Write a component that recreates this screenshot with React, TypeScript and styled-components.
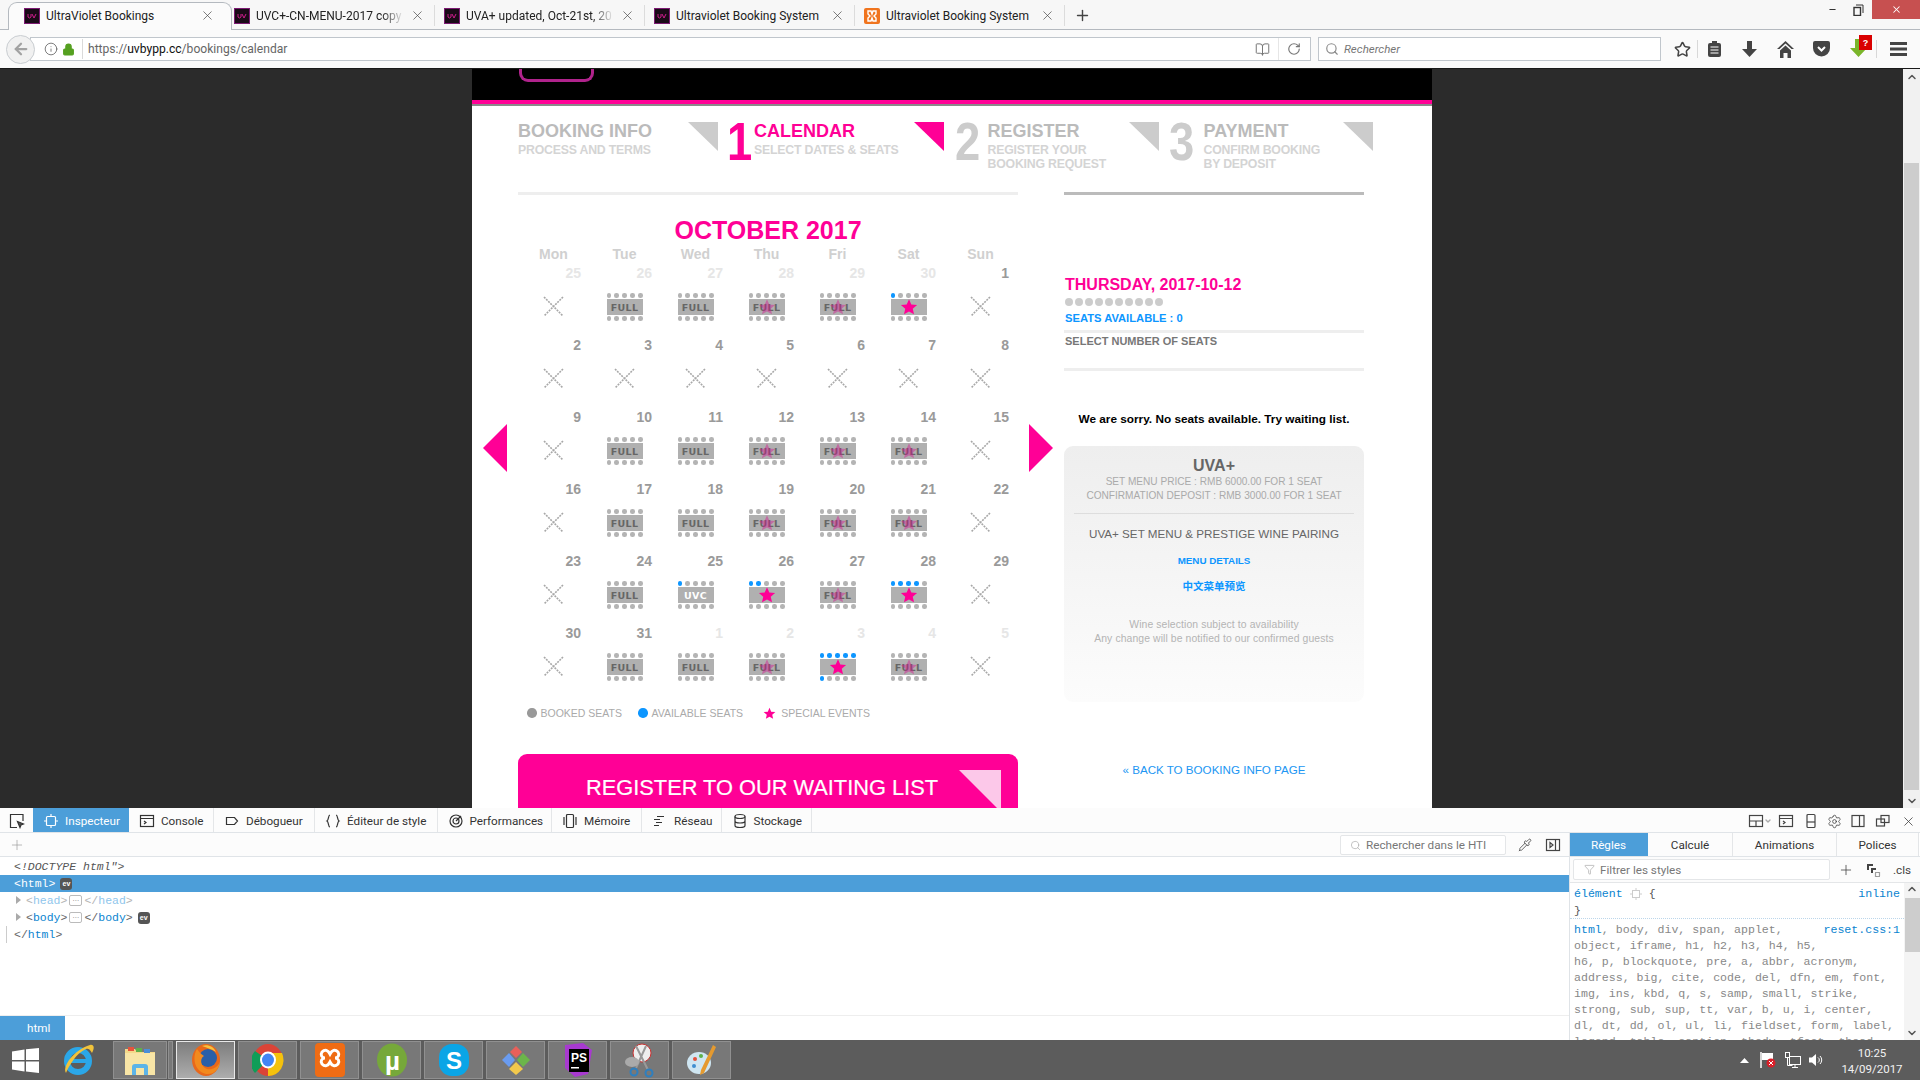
import React from "react";
import styled, { createGlobalStyle } from "styled-components";
import { Info, Lock, ArrowLeft, BookOpen, RotateCw, Search, Star, Plus, X, Minus, Settings, Filter, ChevronUp, ChevronDown, Pipette, ChevronDown as Caret } from "lucide-react";

const PINK = "#ff0096";
const BLUE = "#0d96ff";
const UI = `Roboto, "Noto Sans", sans-serif`;
const ARIAL = `"Liberation Sans", Arial, "Noto Sans CJK SC", sans-serif`;
const MONO = `"Liberation Mono", monospace`;

const Global = createGlobalStyle`
  html, body { margin: 0; padding: 0; background: #2b2b2b; }
  * { box-sizing: border-box; }
`;

const Screen = styled.div`
  width: 1920px; height: 1080px; display: flex; flex-direction: column; overflow: hidden;
  font-family: ${UI}; color: #222;
`;

/* ---------- browser tabs ---------- */
const TabBar = styled.div`
  height: 30px; display: flex; padding-left: 15px; background: #f7f7f7;
  border-bottom: 1px solid #b4b9bf; position: relative;
`;
const Tab = styled.div<{ $active?: boolean }>`
  width: 210px; height: 29px; display: flex; align-items: center; gap: 6px; padding: 2px 10px 0 9px;
  position: relative; font-size: 12px; color: #222;
  &::before {
    content: ""; position: absolute; left: -7px; right: -7px; top: 2px; bottom: -1px;
    background: ${p => (p.$active ? "#fbfbfb" : "transparent")};
    border: ${p => (p.$active ? "1px solid #b4b9bf" : "none")}; border-bottom: none; border-radius: 9px 9px 0 0;
  }
  &::after {
    content: ""; position: absolute; right: 0; top: 5px; bottom: 3px; width: 1px;
    background: ${p => (p.$active ? "transparent" : "#dcdcdc")};
  }
  & > * { position: relative; z-index: 1; }
`;
const TabLabel = styled.span<{ $fade?: boolean }>`
  flex: 1; white-space: nowrap; overflow: hidden;
  ${p => (p.$fade ? `
    -webkit-mask-image: linear-gradient(to right, #000 85%, transparent);
    mask-image: linear-gradient(to right, #000 85%, transparent);
  ` : "")}
`;
const NewTab = styled.div`
  width: 34px; padding-top: 2px; display: flex; align-items: center; justify-content: center; color: #444;
`;
const WinControls = styled.div`
  margin-left: auto; display: flex; align-items: flex-start; height: 19px;
`;
const WinBtn = styled.div<{ $close?: boolean }>`
  width: ${p => (p.$close ? "48px" : "26px")}; height: 19px; margin-left: ${p => (p.$close ? "1px" : "0")};
  display: flex; align-items: center; justify-content: center;
  background: ${p => (p.$close ? "#c75050" : "transparent")}; color: ${p => (p.$close ? "#fff" : "#333")};
`;

/* ---------- nav bar ---------- */
const NavBar = styled.div`
  height: 39px; display: flex; align-items: center; padding-left: 6px; background: #fafafa;
  border-bottom: 1px solid #1a1a1a;
`;
const BackBtn = styled.div`
  width: 29px; height: 29px; border-radius: 50%; background: #f1f1f1; border: 1px solid #c9cdd1;
  display: flex; align-items: center; justify-content: center; color: #a2a2a2; position: relative; z-index: 1;
  margin-right: -5px; flex: none;
`;
const Field = styled.div`
  height: 24px; background: #fff; border: 1px solid #c0c6cc; display: flex; align-items: center;
`;
const UrlField = styled(Field)`
  width: 1281px; padding-left: 13px; color: #666; font-size: 12.1px;
`;
const SearchField = styled(Field)`
  width: 343px; margin-left: 7px; padding-left: 6px; gap: 5px; color: #777; font-size: 11.5px; font-style: italic;
`;
const UrlIcon = styled.span`
  display: flex; color: #555; margin-right: 4px;
`;
const Divider = styled.span`
  width: 1px; height: 20px; background: #dadada; margin: 0 5px 0 3px;
`;
const UrlHost = styled.b`
  font-weight: 400; color: #111;
`;
const UrlRight = styled.span`
  margin-left: auto; display: flex; align-items: center; color: #777; padding-right: 9px;
`;
const UrlDiv = styled.span`
  width: 1px; height: 22px; background: #e6e6e6; margin: 0 8px;
`;
const ToolSlot = styled.div<{ $w: number; $sep?: boolean }>`
  width: ${p => p.$w}px; height: 100%; display: flex; align-items: center; justify-content: center;
  color: #444; position: relative; flex: none;
  ${p => (p.$sep ? "&::after { content: ''; position: absolute; right: 0; top: 10px; bottom: 10px; width: 1px; background: #d8d8d8; }" : "")}
`;
const Tools = styled.div`
  display: flex; height: 100%; margin-left: 5px;
`;
const RedBadge = styled.span`
  position: absolute; left: 20px; top: 5px; width: 13px; height: 15px; background: #d90000; color: #fff;
  font: bold 9px ${ARIAL}; display: flex; align-items: center; justify-content: center;
`;

/* ---------- page ---------- */
const PageArea = styled.div`
  height: 739px; display: flex; overflow: hidden; background: #2b2b2b;
`;
const PageView = styled.div`
  flex: 1; overflow: hidden;
`;
const Column = styled.div`
  width: 960px; margin-left: 472px; height: 900px; background: #fff; position: relative; font-family: ${ARIAL};
`;
const Scrollbar = styled.div`
  width: 17px; background: #f1f1f1; display: flex; flex-direction: column; align-items: center;
  color: #555; flex: none;
`;
const ScrollThumb = styled.div<{ $top: number; $h: number }>`
  width: 15px; height: ${p => p.$h}px; margin-top: ${p => p.$top}px; background: #cdcdcd; flex: none;
`;
const ScrollEnd = styled.div`
  margin-top: auto; height: 15px; display: flex; align-items: center;
`;
const ScrollStart = styled.div`
  height: 15px; display: flex; align-items: center;
`;
const SiteHeader = styled.div`
  height: 35px; background: #000; border-bottom: 4px solid ${PINK}; padding-left: 47px;
  box-shadow: 0 2px 0 #8a8a8a;
`;
const LogoStub = styled.div`
  width: 75px; height: 13px; border: 3px solid #b0238c; border-top: none; border-radius: 0 0 9px 9px;
`;
const Steps = styled.div`
  display: flex; margin-top: 18px; padding-left: 46px; height: 70px;
`;
const StepNum = styled.div<{ $w: number; $on?: boolean; $gap: number }>`
  width: ${p => p.$w}px; margin-left: ${p => p.$gap}px; font-size: 54px; font-weight: 700; line-height: 39px; height: 39px;
  color: ${p => (p.$on ? PINK : "#ccc")}; transform: scaleX(0.84); transform-origin: left center;
`;
const StepText = styled.div<{ $w: number }>`
  width: ${p => p.$w}px; flex: none;
`;
const StepTitle = styled.div<{ $on?: boolean }>`
  font-size: 18px; font-weight: 700; line-height: 18px; color: ${p => (p.$on ? PINK : "#bbb")};
`;
const StepSub = styled.div`
  font-size: 12.3px; font-weight: 700; line-height: 14px; margin-top: 3px; color: #d4d4d4; letter-spacing: -0.2px;
`;
const Flag = styled.div<{ $on?: boolean }>`
  width: 30px; height: 29px; flex: none; background: ${p => (p.$on ? PINK : "#ccc")};
  clip-path: polygon(0 0, 100% 0, 100% 100%);
`;
const Rules = styled.div`
  display: flex; gap: 46px; padding-left: 46px;
`;
const Rule = styled.div<{ $w: number; $c: string }>`
  width: ${p => p.$w}px; height: 3px; background: ${p => p.$c};
`;
const Body = styled.div`
  display: flex; gap: 46px; padding-left: 46px;
`;
const Left = styled.div`
  width: 500px; flex: none;
`;
const Right = styled.div`
  width: 300px; flex: none;
`;
const Month = styled.div`
  margin-top: 23px; font-size: 25px; font-weight: 700; line-height: 25px; text-align: center; color: ${PINK};
`;
const CalGrid = styled.div`
  display: grid; grid-template-columns: repeat(6, 71px) 73px;
`;
const Dow = styled.div`
  margin-top: 3px; height: 19px; text-align: center; font-size: 14px; font-weight: 700; line-height: 16px; color: #d0d0d0;
`;
const Cell = styled.div`
  height: 72px; display: flex; flex-direction: column; align-items: center;
`;
const DayNum = styled.div<{ $muted?: boolean }>`
  align-self: stretch; text-align: right; padding-right: 8px; font-size: 14px; font-weight: 700; line-height: 16px;
  color: ${p => (p.$muted ? "#e6e6e6" : "#9a9a9a")}; margin-bottom: 12px;
`;
const NoSeats = styled.svg`
  margin-top: 3px; display: block;
`;
const SeatBlock = styled.div`
  width: 36px; height: 28px; display: flex; flex-direction: column; gap: 1px;
`;
const SeatRow = styled.div`
  display: flex; justify-content: space-between; align-items: center; height: 5px;
`;
const Seat = styled.span<{ $free?: boolean }>`
  width: 4.5px; height: 4.5px; border-radius: 50%; background: ${p => (p.$free ? "#0d96ff" : "#b4b4b4")};
`;
const Band = styled.div<{ $white?: boolean }>`
  height: 16px; background: #b0b0b0; position: relative; display: flex; align-items: center; justify-content: center;
  font-weight: 700; letter-spacing: 0.3px; color: ${p => (p.$white ? "#fff" : "#666")};
  font-family: "DejaVu Sans", sans-serif; font-size: 9.5px;
`;
const BandStar = styled.svg<{ $faded?: boolean }>`
  position: absolute; left: 9px; top: -1px; opacity: ${p => (p.$faded ? 0.42 : 1)};
`;
const Legend = styled.div`
  margin-top: 9px; padding-left: 9px; height: 14px; display: flex; align-items: center; font-size: 10.5px; color: #aaa;
`;
const LegendDot = styled.span<{ $c: string }>`
  width: 9.5px; height: 9.5px; border-radius: 50%; background: ${p => p.$c}; margin-right: 4px; flex: none;
`;
const LegendText = styled.span<{ $mr: number }>`
  margin-right: ${p => p.$mr}px;
`;
const LegendStar = styled.svg`
  margin-right: 5px; flex: none;
`;
const WaitBtn = styled.div`
  margin-top: 34px; height: 70px; border-radius: 9px 9px 0 0; background: ${PINK}; position: relative;
  color: #fff; font-size: 21.8px; line-height: 26px; padding: 21px 0 0 68px; -webkit-text-stroke: 0.2px #fff;
`;
const WaitFlag = styled.div`
  position: absolute; left: 441px; top: 16px; width: 42px; height: 42px; background: #fcc8e9;
  clip-path: polygon(0 0, 100% 0, 100% 100%);
`;
const Arrow = styled.div<{ $right?: boolean }>`
  position: absolute; top: 355px; ${p => (p.$right ? "left: 557px" : "left: 11px")}; width: 24px; height: 48px; background: ${PINK};
  clip-path: ${p => (p.$right ? "polygon(0 0, 100% 50%, 0 100%)" : "polygon(100% 0, 0 50%, 100% 100%)")};
`;
const DayTitle = styled.div`
  margin-top: 81px; padding-left: 1px; font-size: 16px; line-height: 18px; font-weight: 700; color: ${PINK};
`;
const SeatDots = styled.div`
  margin-top: 4px; padding-left: 1px; display: flex; gap: 2px;
`;
const BigSeat = styled.span`
  width: 8px; height: 8px; border-radius: 50%; background: #ccc;
`;
const SeatsLeft = styled.div`
  margin-top: 5px; padding-left: 1px; font-size: 11.2px; line-height: 14px; font-weight: 700; color: ${BLUE};
`;
const SelectTitle = styled.div`
  padding-left: 1px; margin-top: 1px; font-size: 11px; line-height: 14px; font-weight: 700; color: #777;
`;
const ThinRule = styled.div<{ $top: number }>`
  height: 3px; background: #eee; margin-top: ${p => p.$top}px;
`;
const Sorry = styled.div`
  margin-top: 41px; text-align: center; font-size: 11.8px; line-height: 14px; font-weight: 700; color: #000;
`;
const Card = styled.div`
  margin-top: 20px; height: 256px; border-radius: 9px; background: linear-gradient(#eeeeee, #fcfcfc);
  padding: 11px 10px 0; text-align: center;
`;
const CardTitle = styled.div`
  font-size: 16px; line-height: 18px; font-weight: 700; color: #666;
`;
const CardPrice = styled.div`
  font-size: 10.1px; line-height: 14px; color: #aaa; padding-bottom: 10px; border-bottom: 1px solid #ddd;
`;
const CardName = styled.div`
  font-size: 11.65px; line-height: 16px; color: #666; margin-top: 12px;
`;
const CardLink = styled.div<{ $top: number; $size: number }>`
  font-size: ${p => p.$size}px; line-height: 14px; font-weight: 700; color: ${BLUE}; margin-top: ${p => p.$top}px;
`;
const CardNote = styled.div`
  margin-top: 25px; font-size: 10.4px; line-height: 13.5px; color: #b4b4b4; letter-spacing: 0.1px;
`;
const BackLink = styled.div`
  margin-top: 61px; text-align: center; font-size: 11.6px; line-height: 14px; color: #2196f3;
`;

/* ---------- devtools ---------- */
const DevTools = styled.div`
  height: 232px; background: #fff; display: flex; flex-direction: column; font-family: ${UI}; font-size: 11.7px;
`;
const DevBar = styled.div`
  height: 25px; display: flex; background: #fcfcfc; border-bottom: 1px solid #e0e4e8;
`;
const PickBtn = styled.div`
  width: 33px; padding-top: 2px; display: flex; align-items: center; justify-content: center;
`;
const DevTab = styled.div<{ $w: number; $on?: boolean }>`
  width: ${p => p.$w}px; display: flex; align-items: center; gap: 6px; padding: 2px 0 0 10px; white-space: nowrap;
  background: ${p => (p.$on ? "#4c9ed9" : "transparent")}; color: ${p => (p.$on ? "#fff" : "#333")};
  border-right: 1px solid ${p => (p.$on ? "#4c9ed9" : "#e4e6e8")};
`;
const DevEnd = styled.div`
  margin-left: auto; display: flex; align-items: center; padding-top: 2px; color: #444;
`;
const DevIcon = styled.div<{ $w: number }>`
  width: ${p => p.$w}px; display: flex; justify-content: center; align-items: center;
`;
const DevSplit = styled.div`
  flex: 1; display: flex; min-height: 0;
`;
const MarkupPane = styled.div`
  width: 1570px; border-right: 1px solid #dfe3e7; display: flex; flex-direction: column; flex: none;
`;
const SubBar = styled.div`
  height: 24px; display: flex; align-items: center; padding-top: 1px; background: #fcfcfc; border-bottom: 1px solid #e0e4e8; flex: none;
`;
const SubPlus = styled.div`
  margin-left: 9px; display: flex; color: #999;
`;
const SubSearch = styled.div`
  margin-left: auto; margin-right: 6px; width: 166px; height: 20px; border: 1px solid #e4e6e8; border-radius: 2px; background: #fff;
  display: flex; align-items: center; gap: 5px; padding-left: 9px; color: #777; overflow: hidden; white-space: nowrap;
`;
const SubIcon = styled.div<{ $w: number }>`
  width: ${p => p.$w}px; display: flex; justify-content: center; color: #444; flex: none;
`;
const Markup = styled.div`
  padding-top: 1px; font-family: ${MONO}; font-size: 11.5px; flex: 1;
`;
const MLine = styled.div<{ $sel?: boolean; $pad: number }>`
  height: 17px; line-height: 17px; padding-left: ${p => p.$pad}px; white-space: nowrap; display: flex; align-items: center; position: relative;
  background: ${p => (p.$sel ? "#4c9ed9" : "transparent")}; color: ${p => (p.$sel ? "#fff" : "#666")};
`;
const Doctype = styled.i`
  color: #555;
`;
const TagName = styled.span<{ $faded?: boolean }>`
  color: ${p => (p.$faded ? "#8fc6ec" : "#0a84d0")};
`;
const Angle = styled.span<{ $faded?: boolean }>`
  color: ${p => (p.$faded ? "#b5b5b5" : "#666")};
`;
const Ev = styled.span`
  display: inline-block; margin-left: 5px; width: 12px; height: 12px; border-radius: 3px; background: #555; color: #fff;
  font: bold 7px/12px ${ARIAL}; text-align: center;
`;
const Ellipsis = styled.span`
  display: inline-block; width: 13px; height: 11px; border: 1px solid #bbb; border-radius: 2px; color: #888;
  font: 8px/6px ${ARIAL}; text-align: center; margin: 0 2px;
`;
const Twisty = styled.span`
  position: absolute; left: 16px; top: 4px; border-left: 5px solid #aaa; border-top: 4.5px solid transparent; border-bottom: 4.5px solid transparent;
`;
const Guide = styled.span`
  position: absolute; left: 6px; top: 0; bottom: 0; width: 1px; background: #ccc;
`;
const Crumbs = styled.div`
  height: 25px; border-top: 1px solid #eee; flex: none; display: flex;
`;
const Crumb = styled.div`
  width: 65px; background: #4c9ed9; color: #fff; display: flex; align-items: center; padding-left: 27px;
`;
const RulesPane = styled.div`
  flex: 1; display: flex; flex-direction: column; min-width: 0;
`;
const RuleTabs = styled.div`
  height: 24px; display: flex; border-bottom: 1px solid #e0e4e8; flex: none;
`;
const RuleTab = styled.div<{ $w: number; $on?: boolean }>`
  width: ${p => p.$w}px; display: flex; align-items: center; justify-content: center; padding-top: 1px;
  background: ${p => (p.$on ? "#4c9ed9" : "#fcfcfc")}; color: ${p => (p.$on ? "#fff" : "#333")};
  border-right: 1px solid ${p => (p.$on ? "#4c9ed9" : "#e4e6e8")};
`;
const FilterRow = styled.div`
  height: 26px; display: flex; align-items: center; padding-left: 3px; border-bottom: 1px solid #e4e6e8; flex: none; background: #fcfcfc;
`;
const FilterBox = styled.div`
  width: 257px; height: 21px; border: 1px solid #e4e6e8; border-radius: 2px; background: #fff; display: flex; align-items: center;
  gap: 5px; padding-left: 10px; color: #777;
`;
const RuleBody = styled.div`
  flex: 1; display: flex; min-height: 0; overflow: hidden;
`;
const RuleText = styled.div`
  flex: 1; font-family: ${MONO}; font-size: 11.6px; line-height: 16px; color: #888; overflow: hidden; min-width: 0;
`;
const ElemBlock = styled.div`
  padding: 2px 4px 1px 4px; height: 36px; border-bottom: 1px dotted #bcd6ea; line-height: 17px;
`;
const RuleHead = styled.div`
  display: flex; align-items: center; gap: 7px;
`;
const RuleBlue = styled.span<{ $end?: boolean }>`
  color: #0a84d0; ${p => (p.$end ? "margin-left: auto;" : "")}
`;
const RuleDark = styled.span`
  color: #555;
`;
const Selectors = styled.div`
  padding: 3px 4px 0; white-space: nowrap;
`;
const SelLine = styled.div`
  display: flex; height: 16px; white-space: pre;
`;
const PaneScroll = styled.div`
  width: 16px; background: #f4f4f4; display: flex; flex-direction: column; align-items: center; color: #555; flex: none;
`;

/* ---------- taskbar ---------- */
const Taskbar = styled.div`
  height: 40px; background: #5c5c5c; display: flex; align-items: center; padding-left: 12px; color: #fff; flex: none;
`;
const TaskPlain = styled.div<{ $w: number }>`
  width: ${p => p.$w}px; display: flex; align-items: center; flex: none;
`;
const TaskBtn = styled.div<{ $on?: boolean; $w?: number; $mr?: number }>`
  width: ${p => p.$w ?? 59}px; height: 38px; margin-right: ${p => p.$mr ?? 3}px; flex: none; display: flex; align-items: center; justify-content: center;
  background: ${p => (p.$on ? "linear-gradient(#7d7d7d, #adadad)" : "#787878")};
  border: 1px solid ${p => (p.$on ? "#e8e8e8" : "#909090")};
`;
const Tray = styled.div`
  margin-left: auto; display: flex; align-items: center; height: 100%;
`;
const TraySlot = styled.div<{ $w: number }>`
  width: ${p => p.$w}px; display: flex; justify-content: center; align-items: center;
`;
const Clock = styled.div`
  width: 72px; margin-right: 12px; margin-left: 7px; padding-top: 1px; text-align: center; font-size: 11.5px; line-height: 16px; color: #f2f2f2;
`;
const SvgText = styled.text`
  font-family: ${ARIAL}; font-weight: 700;
`;

const STAR = "12,1.5 15.1,8.6 22.8,9.3 17,14.3 18.7,21.8 12,17.9 5.3,21.8 7,14.3 1.2,9.3 8.9,8.6";

type Kind = "x" | "full" | "fs" | "star" | "uvc";
type Day = [number, Kind, boolean?, number?, number?];

const WEEKS: Day[][] = [
  [[25, "x", true], [26, "full", true], [27, "full", true], [28, "fs", true], [29, "fs", true], [30, "star", true, 1], [1, "x"]],
  [[2, "x"], [3, "x"], [4, "x"], [5, "x"], [6, "x"], [7, "x"], [8, "x"]],
  [[9, "x"], [10, "full"], [11, "full"], [12, "fs"], [13, "fs"], [14, "fs"], [15, "x"]],
  [[16, "x"], [17, "full"], [18, "full"], [19, "fs"], [20, "fs"], [21, "fs"], [22, "x"]],
  [[23, "x"], [24, "full"], [25, "uvc", false, 1], [26, "star", false, 2], [27, "fs"], [28, "star", false, 4], [29, "x"]],
  [[30, "x"], [31, "full"], [1, "full", true], [2, "fs", true], [3, "star", true, 5, 1], [4, "fs", true], [5, "x", true]],
];

const Seats = ({ free = 0 }: { free?: number }) => (
  <SeatRow>
    {[0, 1, 2, 3, 4].map(i => <Seat key={i} $free={i < free} />)}
  </SeatRow>
);

const DayIcon = ({ kind, top, bottom }: { kind: Kind; top?: number; bottom?: number }) => {
  if (kind === "x") {
    return (
      <NoSeats width="21" height="21" viewBox="0 0 21 21">
        <path d="M1 1 L20 20 M20 1 L1 20" stroke="#a8a8a8" strokeWidth="1.6" strokeDasharray="2 1" fill="none" />
      </NoSeats>
    );
  }
  return (
    <SeatBlock>
      <Seats free={top} />
      <Band $white={kind === "uvc"}>
        {kind === "full" || kind === "fs" ? "FULL" : kind === "uvc" ? "UVC" : null}
        {(kind === "fs" || kind === "star") && (
          <BandStar $faded={kind === "fs"} width="18" height="18" viewBox="0 0 24 24"><polygon points={STAR} fill={kind === "fs" ? "#d8108f" : PINK} /></BandStar>
        )}
      </Band>
      <Seats free={bottom} />
    </SeatBlock>
  );
};

const Favicon = ({ xampp }: { xampp?: boolean }) => xampp ? (
  <svg width="16" height="16" viewBox="0 0 16 16"><rect width="16" height="16" rx="2" fill="#f0741e" /><path d="M4 3h3l1 3 1-3h3v3l-2 2 2 2v3H9L8 10l-1 3H4v-3l2-2-2-2z" fill="none" stroke="#fff" strokeWidth="1.4" /></svg>
) : (
  <svg width="16" height="16" viewBox="0 0 16 16"><rect width="16" height="16" fill="#1a0a18" /><rect x=".5" y=".5" width="15" height="15" fill="none" stroke="#7c1a72" /><path d="M4 6v3l1.500 1L7 9V6M8 6l2 4 2-4" fill="none" stroke="#e2209a" strokeWidth=".9" /></svg>
);

const BrowserTab = ({ label, active, xampp, fade }: { label: string; active?: boolean; xampp?: boolean; fade?: boolean }) => (
  <Tab $active={active}>
    <Favicon xampp={xampp} />
    <TabLabel $fade={fade}>{label}</TabLabel>
    <X size={15} strokeWidth={1.1} color="#444" />
  </Tab>
);

const Ic = ({ children, s = 16, w = 1.2 }: { children: React.ReactNode; s?: number; w?: number }) => (
  <svg width={s} height={s} viewBox="0 0 16 16" fill="none" stroke="currentColor" strokeWidth={w}>{children}</svg>
);

const DEV_TABS: { label: string; w: number; icon: React.ReactNode; on?: boolean }[] = [
  { label: "Inspecteur", w: 96, on: true, icon: <Ic><rect x="3.5" y="3.5" width="9" height="9" rx="1" /><path d="M8 1v2M8 13v2M1 8h2M13 8h2" /></Ic> },
  { label: "Console", w: 85, icon: <Ic><rect x="1.5" y="2.5" width="13" height="11" /><path d="M1.5 5.5h13M5 8l2 1.5L5 11" /></Ic> },
  { label: "Débogueur", w: 101, icon: <Ic><path d="M2.5 4.5h8l3 3.5-3 3.5h-8z" /></Ic> },
  { label: "Éditeur de style", w: 122.5, icon: <Ic><path d="M5 2C3 2 4 7 2 8c2 1 1 6 3 6M11 2c2 0 1 5 3 6-2 1-1 6-3 6" /></Ic> },
  { label: "Performances", w: 114.5, icon: <Ic><circle cx="8" cy="8" r="6" /><circle cx="8" cy="8" r="3" /><path d="M8 8l5-5" /></Ic> },
  { label: "Mémoire", w: 90, icon: <Ic><rect x="4.5" y="1.5" width="7" height="13" rx="1" /><path d="M2 4v8M14 4v8" /></Ic> },
  { label: "Réseau", w: 79.5, icon: <Ic><path d="M5 3.5h7M2 6.5h6M4 9.5h6M2 12.5h5" /></Ic> },
  { label: "Stockage", w: 90, icon: <Ic><ellipse cx="8" cy="3.5" rx="5" ry="2" /><path d="M3 3.5v9c0 1 2 2 5 2s5-1 5-2v-9M3 8c0 1 2 2 5 2s5-1 5-2" /></Ic> },
];

const SELECTOR_LINES = [
  "object, iframe, h1, h2, h3, h4, h5,",
  "h6, p, blockquote, pre, a, abbr, acronym,",
  "address, big, cite, code, del, dfn, em, font,",
  "img, ins, kbd, q, s, samp, small, strike,",
  "strong, sub, sup, tt, var, b, u, i, center,",
  "dl, dt, dd, ol, ul, li, fieldset, form, label,",
  "legend, table, caption, tbody, tfoot, thead,",
];

export default function App() {
  return (
    <Screen>
      <Global />
      <TabBar>
        <BrowserTab active label="UltraViolet Bookings" />
        <BrowserTab fade label="UVC+-CN-MENU-2017 copy" />
        <BrowserTab fade label="UVA+ updated, Oct-21st, 20" />
        <BrowserTab label="Ultraviolet Booking System" />
        <BrowserTab xampp label="Ultraviolet Booking System" />
        <NewTab><Plus size={17} strokeWidth={2} /></NewTab>
        <WinControls>
          <WinBtn><Minus size={9} strokeWidth={3} /></WinBtn>
          <WinBtn>
            <svg width="11" height="12" viewBox="0 0 11 12" fill="none" stroke="#333"><rect x="1" y="3.5" width="6.5" height="8" strokeWidth="1.4" /><path d="M3 1h7v8" /></svg>
          </WinBtn>
          <WinBtn $close><X size={11} strokeWidth={2.2} /></WinBtn>
        </WinControls>
      </TabBar>

      <NavBar>
        <BackBtn><ArrowLeft size={18} strokeWidth={3} /></BackBtn>
        <UrlField>
          <UrlIcon><Info size={14} strokeWidth={1.3} /></UrlIcon>
          <UrlIcon><Lock size={13} fill="#55a020" color="#55a020" /></UrlIcon>
          <Divider />
          <span>https://<UrlHost>uvbypp.cc</UrlHost>/bookings/calendar</span>
          <UrlRight>
            <BookOpen size={15} strokeWidth={1.6} />
            <UrlDiv />
            <RotateCw size={14} strokeWidth={2} />
          </UrlRight>
        </UrlField>
        <SearchField>
          <Search size={14} strokeWidth={2} color="#8a8a8a" />
          Rechercher
        </SearchField>
        <Tools>
          <ToolSlot $w={32} $sep><Star size={17} strokeWidth={2.2} /></ToolSlot>
          <ToolSlot $w={33}>
            <svg width="15" height="18" viewBox="0 0 15 18"><rect x="1" y="3" width="13" height="14" rx="2" fill="#444" /><rect x="5" y="1" width="5" height="4" fill="#444" /><path d="M3.5 7h8M3.5 10h8M3.5 13h8" stroke="#fff" /></svg>
          </ToolSlot>
          <ToolSlot $w={36}>
            <svg width="15" height="16" viewBox="0 0 15 16"><path d="M5 0h5v8h5l-7.500 8L0 8h5z" fill="#444" /></svg>
          </ToolSlot>
          <ToolSlot $w={36}>
            <svg width="17" height="17" viewBox="0 0 17 17"><path d="M8.500 0L17 8h-2.500l-6-5.500L2.500 8H0z M8.500 4.500L14 9.500V17h-3.500v-5h-4v5H3V9.500z" fill="#444" /></svg>
          </ToolSlot>
          <ToolSlot $w={36}>
            <svg width="17" height="16" viewBox="0 0 17 16"><path d="M2 0h13a2 2 0 0 1 2 2v5a8.500 8.500 0 0 1-17 0V2a2 2 0 0 1 2-2z" fill="#444" /><path d="M5 6l3.500 3.500L12 6" stroke="#fff" strokeWidth="2" fill="none" /></svg>
          </ToolSlot>
          <ToolSlot $w={38} $sep>
            <svg width="17" height="20" viewBox="0 0 17 20"><path d="M5 0h7v9h5l-8.500 9L0 9h5z" fill="#7ab52a" /></svg>
            <RedBadge>?</RedBadge>
          </ToolSlot>
          <ToolSlot $w={43}>
            <svg width="17" height="14" viewBox="0 0 17 14"><path d="M0 1.500h17M0 7h17M0 12.500h17" stroke="#444" strokeWidth="3" /></svg>
          </ToolSlot>
        </Tools>
      </NavBar>

      <PageArea>
        <PageView>
          <Column>
            <SiteHeader><LogoStub /></SiteHeader>
            <Steps>
              <StepText $w={170}>
                <StepTitle>BOOKING INFO</StepTitle>
                <StepSub>PROCESS AND TERMS</StepSub>
              </StepText>
              <Flag />
              <StepNum $w={27} $gap={9} $on>1</StepNum>
              <StepText $w={160}>
                <StepTitle $on>CALENDAR</StepTitle>
                <StepSub>SELECT DATES &amp; SEATS</StepSub>
              </StepText>
              <Flag $on />
              <StepNum $w={32.5} $gap={11}>2</StepNum>
              <StepText $w={141.5}>
                <StepTitle>REGISTER</StepTitle>
                <StepSub>REGISTER YOUR<br />BOOKING REQUEST</StepSub>
              </StepText>
              <Flag />
              <StepNum $w={34.5} $gap={10}>3</StepNum>
              <StepText $w={139.5}>
                <StepTitle>PAYMENT</StepTitle>
                <StepSub>CONFIRM BOOKING<br />BY DEPOSIT</StepSub>
              </StepText>
              <Flag />
            </Steps>
            <Rules>
              <Rule $w={500} $c="#eeeeee" />
              <Rule $w={300} $c="#bbbbbb" />
            </Rules>
            <Body>
              <Left>
                <Month>OCTOBER 2017</Month>
                <CalGrid>
                  {["Mon", "Tue", "Wed", "Thu", "Fri", "Sat", "Sun"].map(d => <Dow key={d}>{d}</Dow>)}
                  {WEEKS.flat().map(([n, kind, muted, top, bottom], i) => (
                    <Cell key={i}>
                      <DayNum $muted={muted}>{n}</DayNum>
                      <DayIcon kind={kind} top={top} bottom={bottom} />
                    </Cell>
                  ))}
                </CalGrid>
                <Legend>
                  <LegendDot $c="#999" />
                  <LegendText $mr={16}>BOOKED SEATS</LegendText>
                  <LegendDot $c={BLUE} />
                  <LegendText $mr={20}>AVAILABLE SEATS</LegendText>
                  <LegendStar width="13" height="13" viewBox="0 0 24 24"><polygon points={STAR} fill={PINK} /></LegendStar>
                  <LegendText $mr={0}>SPECIAL EVENTS</LegendText>
                </Legend>
                <WaitBtn>
                  REGISTER TO OUR WAITING LIST
                  <WaitFlag />
                </WaitBtn>
              </Left>
              <Right>
                <DayTitle>THURSDAY, 2017-10-12</DayTitle>
                <SeatDots>{Array.from({ length: 10 }, (_, i) => <BigSeat key={i} />)}</SeatDots>
                <SeatsLeft>SEATS AVAILABLE : 0</SeatsLeft>
                <ThinRule $top={5} />
                <SelectTitle>SELECT NUMBER OF SEATS</SelectTitle>
                <ThinRule $top={20} />
                <Sorry>We are sorry. No seats available. Try waiting list.</Sorry>
                <Card>
                  <CardTitle>UVA+</CardTitle>
                  <CardPrice>SET MENU PRICE : RMB 6000.00 FOR 1 SEAT<br />CONFIRMATION DEPOSIT : RMB 3000.00 FOR 1 SEAT</CardPrice>
                  <CardName>UVA+ SET MENU &amp; PRESTIGE WINE PAIRING</CardName>
                  <CardLink $top={12} $size={9.8}>MENU DETAILS</CardLink>
                  <CardLink $top={11} $size={10.5}>中文菜单预览</CardLink>
                  <CardNote>Wine selection subject to availability<br />Any change will be notified to our confirmed guests</CardNote>
                </Card>
                <BackLink>« BACK TO BOOKING INFO PAGE</BackLink>
              </Right>
            </Body>
            <Arrow />
            <Arrow $right />
          </Column>
        </PageView>
        <Scrollbar>
          <ScrollStart><ChevronUp size={12} strokeWidth={3} /></ScrollStart>
          <ScrollThumb $top={79} $h={627} />
          <ScrollEnd><ChevronDown size={12} strokeWidth={3} /></ScrollEnd>
        </Scrollbar>
      </PageArea>

      <DevTools>
        <DevBar>
          <PickBtn>
            <svg width="16" height="16" viewBox="0 0 16 16" fill="none" stroke="#333" strokeWidth="1.2"><path d="M14 8V1.500H1.500v13H8" /><path d="M8.500 8.500l6 2.500-2.500 1-1 2.500z" fill="#555" /></svg>
          </PickBtn>
          {DEV_TABS.map(t => (
            <DevTab key={t.label} $w={t.w} $on={t.on}>{t.icon}{t.label}</DevTab>
          ))}
          <DevEnd>
            <DevIcon $w={26}><Ic><rect x="1.5" y="2.5" width="13" height="11" /><path d="M1.5 8h13M8 8v5.500" /></Ic><Caret size={8} strokeWidth={4} color="#aaa" /></DevIcon>
            <DevIcon $w={25}><Ic><rect x="1.500" y="2.500" width="13" height="11" /><path d="M1.500 5.500h13M5 8l2 1.500L5 11" /></Ic></DevIcon>
            <DevIcon $w={25}><Ic><rect x="4" y="1.500" width="8" height="13" rx="1" /><path d="M4 9h8" /></Ic></DevIcon>
            <DevIcon $w={23}><Settings size={15} strokeWidth={1.3} /></DevIcon>
            <DevIcon $w={24}><Ic><rect x="2" y="2.500" width="12" height="11" /><path d="M9.500 2.500v11" /></Ic></DevIcon>
            <DevIcon $w={26}><Ic><rect x="1.500" y="6" width="8" height="7" /><rect x="6" y="2.500" width="8" height="7" /></Ic></DevIcon>
            <DevIcon $w={24}><X size={15} strokeWidth={1.3} /></DevIcon>
          </DevEnd>
        </DevBar>
        <DevSplit>
          <MarkupPane>
            <SubBar>
              <SubPlus><Plus size={16} strokeWidth={1} /></SubPlus>
              <SubSearch><Search size={11} strokeWidth={1.5} color="#aaa" />Rechercher dans le HTI</SubSearch>
              <SubIcon $w={25}><Pipette size={14} strokeWidth={1.4} /></SubIcon>
              <SubIcon $w={32}>
                <Ic><rect x="1.500" y="2.500" width="13" height="11" /><path d="M10.500 2.500v11M5 5.500l3 2.500-3 2.500z" /></Ic>
              </SubIcon>
            </SubBar>
            <Markup>
              <MLine $pad={14}><Doctype>&lt;!DOCTYPE html"&gt;</Doctype></MLine>
              <MLine $pad={14} $sel>&lt;html&gt;<Ev>ev</Ev></MLine>
              <MLine $pad={26}>
                <Twisty />
                <Angle $faded>&lt;</Angle><TagName $faded>head</TagName><Angle $faded>&gt;</Angle>
                <Ellipsis>...</Ellipsis>
                <Angle $faded>&lt;/</Angle><TagName $faded>head</TagName><Angle $faded>&gt;</Angle>
              </MLine>
              <MLine $pad={26}>
                <Twisty />
                <Angle>&lt;</Angle><TagName>body</TagName><Angle>&gt;</Angle>
                <Ellipsis>...</Ellipsis>
                <Angle>&lt;/</Angle><TagName>body</TagName><Angle>&gt;</Angle>
                <Ev>ev</Ev>
              </MLine>
              <MLine $pad={14}>
                <Guide />
                <Angle>&lt;/</Angle><TagName>html</TagName><Angle>&gt;</Angle>
              </MLine>
            </Markup>
            <Crumbs><Crumb>html</Crumb></Crumbs>
          </MarkupPane>
          <RulesPane>
            <RuleTabs>
              <RuleTab $w={78} $on>Règles</RuleTab>
              <RuleTab $w={85}>Calculé</RuleTab>
              <RuleTab $w={104}>Animations</RuleTab>
              <RuleTab $w={82}>Polices</RuleTab>
            </RuleTabs>
            <FilterRow>
              <FilterBox><Filter size={11} strokeWidth={1.3} color="#999" />Filtrer les styles</FilterBox>
              <SubIcon $w={32}><Plus size={16} strokeWidth={1.2} /></SubIcon>
              <SubIcon $w={22}>
                <Ic><path d="M2 2h6v2H4v4H2z" fill="#444" stroke="none" /><path d="M6 6h5v2H8v3H6z" fill="#444" stroke="none" /><rect x="10.500" y="10.500" width="4" height="4" strokeDasharray="1 1" /></Ic>
              </SubIcon>
              <SubIcon $w={36}>.cls</SubIcon>
            </FilterRow>
            <RuleBody>
              <RuleText>
                <ElemBlock>
                  <RuleHead>
                    <RuleBlue>élément</RuleBlue>
                    <svg width="12" height="12" viewBox="0 0 12 12" fill="none" stroke="#ccc"><rect x="2.500" y="2.500" width="7" height="7" /><path d="M6 0v2M6 10v2M0 6h2M10 6h2" /></svg>
                    <RuleDark>{"{"}</RuleDark>
                    <RuleBlue $end>inline</RuleBlue>
                  </RuleHead>
                  <RuleDark>{"}"}</RuleDark>
                </ElemBlock>
                <Selectors>
                  <SelLine>
                    <RuleBlue>html</RuleBlue>, body, div, span, applet,
                    <RuleBlue $end>reset.css:1</RuleBlue>
                  </SelLine>
                  {SELECTOR_LINES.map(l => <SelLine key={l}>{l}</SelLine>)}
                </Selectors>
              </RuleText>
              <PaneScroll>
                <ChevronUp size={12} strokeWidth={3} />
                <ScrollThumb $top={3} $h={54} />
                <ScrollEnd><ChevronDown size={12} strokeWidth={3} /></ScrollEnd>
              </PaneScroll>
            </RuleBody>
          </RulesPane>
        </DevSplit>
      </DevTools>

      <Taskbar>
        <TaskPlain $w={50}>
          <svg width="27" height="25" viewBox="0 0 27 25" fill="#fff"><path d="M0 3.500L12.500 1.500v10.500H0zM14 1.200L27 0v12H14zM0 13.500h12.500V23.500L0 21.500zM14 13.500h13V25L14 23.500z" /></svg>
        </TaskPlain>
        <TaskPlain $w={51}>
          <svg width="34" height="36" viewBox="0 0 34 36"><circle cx="16" cy="19" r="11" fill="none" stroke="#2ba7e8" strokeWidth="6" /><path d="M6 19h20" stroke="#2ba7e8" strokeWidth="4" /><path d="M4 31C0 24 12 8 28 3c4-1 5 3 2 8-2-4-4-5-6-4C14 11 7 24 4 31z" fill="#f1c33b" /></svg>
        </TaskPlain>
        <TaskBtn $w={54} $mr={1}>
          <svg width="32" height="32" viewBox="0 0 32 32"><path d="M1 5h10l2 3h18v7H1z" fill="#f4d98a" /><rect x="1" y="9" width="30" height="22" fill="#f8e5a6" /><rect x="4" y="3" width="6" height="4" fill="#e6533c" /><rect x="12" y="4" width="6" height="4" fill="#5fb04a" /><rect x="20" y="5" width="6" height="4" fill="#4a8ed8" /><path d="M8 31v-8a3 3 0 0 1 3-3h10a3 3 0 0 1 3 3v8h-4v-7h-8v7z" fill="#5cb4e8" /></svg>
        </TaskBtn>
        <TaskBtn $w={5} />
        <TaskBtn $on>
          <svg width="32" height="34" viewBox="0 0 32 34"><ellipse cx="16" cy="17" rx="14" ry="16" fill="#e8681b" /><ellipse cx="18" cy="15" rx="9" ry="9" fill="#2a5fa8" /><path d="M7 6C2 14 4 28 16 31c8 1 13-5 14-12-3 6-8 8-13 7-6-2-8-10-3-13-3-2-5-4-7-7z" fill="#f28a1e" /><path d="M12 3c6-2 12 1 14 6-4-3-9-4-14-6z" fill="#f7c340" /></svg>
        </TaskBtn>
        <TaskBtn>
          <svg width="32" height="34" viewBox="0 0 32 34"><ellipse cx="16" cy="17" rx="15" ry="16" fill="#db4437" /><path d="M16 17L3 30A15 16 0 0 1 3 8z" fill="#0f9d58" /><path d="M16 10h14a15 16 0 0 1-14 23z" fill="#f4c20d" /><ellipse cx="16" cy="17" rx="8" ry="8.500" fill="#fff" /><ellipse cx="16" cy="17" rx="6" ry="6.500" fill="#4285f4" /></svg>
        </TaskBtn>
        <TaskBtn>
          <svg width="32" height="36" viewBox="0 0 32 36"><rect x="1" y="1" width="30" height="34" rx="4" fill="#ef6c14" /><path d="M8 10c3-3 6-2 8 2 2-4 5-5 8-2 2 3 0 6-3 6 3 0 5 3 3 6-3 3-6 2-8-2-2 4-5 5-8 2-2-3 0-6 3-6-3 0-5-3-3-6z" fill="none" stroke="#fff" strokeWidth="3" /></svg>
        </TaskBtn>
        <TaskBtn>
          <svg width="32" height="34" viewBox="0 0 32 34"><ellipse cx="16" cy="17" rx="15" ry="16.500" fill="#76a83a" /><SvgText x="9" y="27" fontSize="26" fill="#fff">µ</SvgText></svg>
        </TaskBtn>
        <TaskBtn>
          <svg width="32" height="34" viewBox="0 0 32 34"><rect x="1" y="1" width="30" height="32" rx="13" fill="#0aa5e6" /><SvgText x="8" y="26" fontSize="24" fill="#fff">S</SvgText></svg>
        </TaskBtn>
        <TaskBtn>
          <svg width="32" height="32" viewBox="0 0 32 32"><path d="M16 2l6 6-6 6-6-6z" fill="#e8605a" /><path d="M2 16l7-7 6 7-6 7z" fill="#6a9cf0" /><path d="M30 16l-7-7-6 7 6 7z" fill="#6cb64a" /><path d="M16 18l7 7-7 6-7-6z" fill="#f2c94c" /></svg>
        </TaskBtn>
        <TaskBtn>
          <svg width="32" height="36" viewBox="0 0 32 36"><path d="M3 3l18-2 9 7-4 24-13 3-10-9z" fill="#a83ad0" /><rect x="7" y="7" width="20" height="23" fill="#000" /><SvgText x="9" y="20" fontSize="12" fill="#fff">PS</SvgText><rect x="9" y="25" width="8" height="1.500" fill="#fff" /></svg>
        </TaskBtn>
        <TaskBtn>
          <svg width="32" height="36" viewBox="0 0 32 36" fill="none"><circle cx="18" cy="11" r="9" fill="#eee" stroke="#c33" /><path d="M12 4l12 24M22 4L12 26" stroke="#999" strokeWidth="2" /><circle cx="10" cy="30" r="3.500" stroke="#2e7fbf" strokeWidth="2" /><circle cx="25" cy="31" r="3.500" stroke="#2e7fbf" strokeWidth="2" /><ellipse cx="8" cy="20" rx="7" ry="5" fill="#aaa" /></svg>
        </TaskBtn>
        <TaskBtn>
          <svg width="32" height="34" viewBox="0 0 32 34"><ellipse cx="13" cy="20" rx="12" ry="11" fill="#cfe6f2" /><circle cx="9" cy="16" r="2" fill="#e2503c" /><circle cx="15" cy="13" r="2" fill="#5db04a" /><circle cx="8" cy="23" r="2" fill="#3f8ed0" /><path d="M27 2l3 2-12 26-4 2 1-5z" fill="#e59a2f" /></svg>
        </TaskBtn>
        <Tray>
          <TraySlot $w={24}><svg width="9" height="5" viewBox="0 0 9 5"><path d="M4.500 0L9 5H0z" fill="#fff" /></svg></TraySlot>
          <TraySlot $w={24}>
            <svg width="16" height="16" viewBox="0 0 16 16"><path d="M1 0v16" stroke="#fff" strokeWidth="1.500" /><path d="M2 1h11v7H2z" fill="#fff" /><circle cx="11" cy="11" r="4.500" fill="#d9202a" /><path d="M9 9l4 4M13 9l-4 4" stroke="#fff" /></svg>
          </TraySlot>
          <TraySlot $w={25}>
            <svg width="16" height="16" viewBox="0 0 16 16" fill="none" stroke="#fff"><rect x=".5" y=".5" width="4" height="5" /><rect x="4.500" y="4.500" width="11" height="8" /><path d="M2.500 5.500v8h5M10 12.500v3M7 15.500h6" /></svg>
          </TraySlot>
          <TraySlot $w={24}>
            <svg width="16" height="14" viewBox="0 0 16 14"><path d="M0 4.500h3L7 1v12L3 9.500H0z" fill="#fff" /><path d="M9 4.500a3 3 0 0 1 0 5M11 3a5.500 5.500 0 0 1 0 8" stroke="#fff" fill="none" /></svg>
          </TraySlot>
          <Clock>10:25<br />14/09/2017</Clock>
        </Tray>
      </Taskbar>
    </Screen>
  );
}
